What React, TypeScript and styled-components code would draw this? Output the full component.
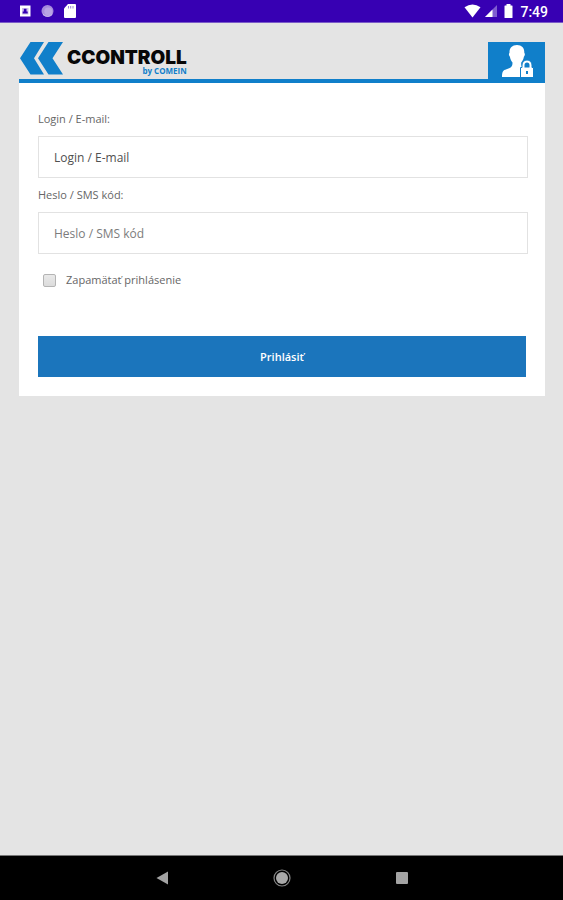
import React from 'react';
import styled, { createGlobalStyle } from 'styled-components';

const BLUE = '#1b75bc';
const LOGO_BLUE = '#107fca';

const GlobalStyle = createGlobalStyle`
  *, *::before, *::after { box-sizing: border-box; }
  body { margin: 0; background: #e4e4e4; }
`;

const Screen = styled.div`
  min-height: 100vh;
  display: flex;
  flex-direction: column;
  background: #e4e4e4;
  color: #666;
  font-family: 'Open Sans', sans-serif;
  font-size: 11px;
  line-height: 16px;
`;

const StatusBar = styled.div`
  height: 23px;
  padding: 0 15px 0 19px;
  display: flex;
  align-items: center;
  justify-content: space-between;
  background: #3700b3;
  border-bottom: 1px solid #7a5bc8;
  color: #fff;
`;

const StatusGroup = styled.div<{ $gap: number }>`
  display: flex;
  align-items: center;
  gap: ${({ $gap }) => $gap}px;
`;

const Clock = styled.time`
  margin-left: 2px;
  padding-top: 2px;
  font-family: Roboto, sans-serif;
  font-size: 14px;
  font-weight: 500;
  line-height: 16px;
`;

const Main = styled.main`
  flex: 1;
  padding: 19px 18px 19px 19px;
`;

const Header = styled.header`
  display: flex;
  align-items: flex-start;
  justify-content: space-between;
  border-bottom: 4px solid ${LOGO_BLUE};
`;

const Logo = styled.a`
  display: flex;
  gap: 3px;
  text-decoration: none;
`;

const LogoWords = styled.span`
  display: flex;
  flex-direction: column;
  align-items: flex-end;
  padding-top: 8px;
`;

const LogoName = styled.span`
  color: #080808;
  font-family: Inter, sans-serif;
  font-size: 19px;
  font-weight: 900;
  line-height: 16px;
`;

const LogoByline = styled.span`
  color: ${LOGO_BLUE};
  font-size: 8px;
  font-weight: 700;
  line-height: 10px;
`;

const AccountButton = styled.button`
  width: 57px;
  height: 37px;
  padding: 0;
  border: 0;
  display: flex;
  align-items: center;
  justify-content: center;
  background: ${LOGO_BLUE};
  cursor: pointer;
`;

const Form = styled.form`
  padding: 28px 17px 19px 19px;
  display: flex;
  flex-direction: column;
  background: #fff;
`;

const Label = styled.label`
  align-self: flex-start;
  margin-bottom: 9px;
`;

const Field = styled.input<{ $strong?: boolean }>`
  width: 100%;
  height: 42px;
  margin-bottom: 9px;
  padding: 0 15px;
  border: 1px solid #e2e2e2;
  border-radius: 0;
  background: #fff;
  color: #555;
  font: inherit;
  font-size: 12px;

  &::placeholder {
    color: ${({ $strong }) => ($strong ? '#505050' : '#7c7c7c')};
    opacity: 1;
  }
`;

const Remember = styled.label`
  align-self: flex-start;
  display: flex;
  align-items: center;
  gap: 10px;
  margin: 9px 0 48px 5px;
`;

const Checkbox = styled.input`
  appearance: none;
  width: 13px;
  height: 13px;
  margin: 0;
  border: 1px solid #b4b4b4;
  border-radius: 2px;
  background: linear-gradient(#e9e9e9, #dcdcdc);

  &:checked { background: ${BLUE}; }
`;

const Submit = styled.button`
  height: 41px;
  margin-right: 2px;
  border: 0;
  background: ${BLUE};
  color: #fff;
  font: inherit;
  font-weight: 600;
  cursor: pointer;
`;

const NavBar = styled.nav`
  height: 45px;
  border-top: 1px solid #777;
  display: flex;
  align-items: center;
  justify-content: center;
  gap: 100px;
  background: #000;
`;

const NavButton = styled.button`
  width: 20px;
  height: 20px;
  padding: 0;
  border: 0;
  display: flex;
  background: transparent;
  cursor: pointer;
`;

export default function App() {
  return (
    <>
      <GlobalStyle />
      <Screen>
        <StatusBar>
          <StatusGroup $gap={10}>
            <svg width="12" height="14" viewBox="0 0 12 14" aria-hidden="true">
              <path fill="#fff" d="M1 1.500h10.500v11H1z" />
              <path fill="#3700b3" d="M3 4h6.500v6.500H3z" opacity=".25" />
              <path fill="#3700b3" d="M4.800 4.800h2.700v2.700h1.200V9.500H3.700V7.500h1.100z" />
            </svg>
            <svg width="13" height="14" viewBox="0 0 13 14" aria-hidden="true">
              <circle cx="6.500" cy="7" r="6" fill="#a78bdd" />
              <circle cx="7.300" cy="7.600" r="4" fill="#b9a3e4" />
              <path d="M2 10a6 6 0 0 0 9.500 0" fill="none" stroke="#cfc0ee" />
            </svg>
            <svg width="12" height="14" viewBox="0 0 12 14" aria-hidden="true">
              <path fill="#fff" d="M4 0h7q1 0 1 1v12q0 1-1 1H1q-1 0-1-1V4.500z" />
              <path d="M4.500 2v2.500M6.700 2v2.500M9 2v2.500" stroke="#9b80db" />
            </svg>
          </StatusGroup>
          <StatusGroup $gap={3}>
            <svg width="17" height="14" viewBox="0 0 17 14" aria-hidden="true">
              <path fill="#fff" d="M.5 3.300Q8.500-2.500 16.500 3.300L8.500 13.500z" />
            </svg>
            <svg width="14" height="14" viewBox="0 0 14 14" aria-hidden="true">
              <path fill="#7f5dd0" d="M13 1v12H1z" />
              <path fill="#fff" d="M8.500 5.500V13H1z" />
            </svg>
            <svg width="14" height="14" viewBox="0 0 14 14" aria-hidden="true">
              <path fill="#fff" d="M5.500 0h4v1.500H11q.5 0 .5.500v11.500q0 .5-.5.500H4q-.5 0-.5-.5V2q0-.5.5-.5h1.500z" />
            </svg>
            <Clock>7:49</Clock>
          </StatusGroup>
        </StatusBar>

        <Main>
          <Header>
            <Logo href="#" aria-label="CCONTROLL by COMEIN">
              <svg width="45" height="33" viewBox="0 0 45 33" aria-hidden="true">
                <path fill={LOGO_BLUE} d="M11.500 0H25L15 16.200 25 32.500H11.500L1 16.200z" />
                <path fill={LOGO_BLUE} d="M29.500 0H44L33.500 16.200 44 32.500H29.500L19 16.200z" />
              </svg>
              <LogoWords>
                <LogoName>CCONTROLL</LogoName>
                <LogoByline>by COMEIN</LogoByline>
              </LogoWords>
            </Logo>
            <AccountButton type="button" aria-label="Account">
              <svg width="34" height="33" viewBox="0 0 34 33" aria-hidden="true">
                <path
                  fill="#fff"
                  d="M17 1c5 0 7.600 3.300 7.300 8 .9.200.8 2.500-.4 3.700-.5 3-1.700 4.700-2.700 5.800 0 3.300.6 4.100 2.800 5l6 3V33H2c0-5.500 1-6.800 4.500-7.800 4.600-1.400 6-2.300 6-6.700-1-1.100-2.100-2.800-2.600-5.800-1.200-1.200-1.300-3.500-.4-3.700C9.200 4.300 12 1 17 1z"
                />
                <path
                  fill="#fff"
                  stroke={LOGO_BLUE}
                  strokeWidth="1"
                  d="M20.500 23.500h1.500v-2.500a5 5 0 0 1 10 0v2.500h1.500v10h-13z"
                />
                <path fill={LOGO_BLUE} d="M24.500 23.500V21a2.500 2.500 0 0 1 5 0v2.500zM26 27h2v3h-2z" />
              </svg>
            </AccountButton>
          </Header>

          <Form onSubmit={(event) => event.preventDefault()}>
            <Label htmlFor="login">Login / E-mail:</Label>
            <Field id="login" type="text" placeholder="Login / E-mail" autoComplete="username" $strong />
            <Label htmlFor="password">Heslo / SMS kód:</Label>
            <Field id="password" type="password" placeholder="Heslo / SMS kód" autoComplete="current-password" />
            <Remember>
              <Checkbox type="checkbox" />
              Zapamätať prihlásenie
            </Remember>
            <Submit type="submit">Prihlásiť</Submit>
          </Form>
        </Main>

        <NavBar aria-label="System navigation">
          <NavButton type="button" aria-label="Back">
            <svg width="20" height="20" viewBox="0 0 20 20" aria-hidden="true">
              <path fill="#a3a3a3" d="M16 3.500v13L4.500 10z" />
            </svg>
          </NavButton>
          <NavButton type="button" aria-label="Home">
            <svg width="20" height="20" viewBox="0 0 20 20" aria-hidden="true">
              <circle cx="10" cy="10" r="8" fill="none" stroke="#858585" strokeWidth="1.200" />
              <circle cx="10" cy="10" r="6" fill="#a9a9a9" />
            </svg>
          </NavButton>
          <NavButton type="button" aria-label="Overview">
            <svg width="20" height="20" viewBox="0 0 20 20" aria-hidden="true">
              <rect x="4" y="4" width="12" height="12" rx="1" fill="#a3a3a3" />
            </svg>
          </NavButton>
        </NavBar>
      </Screen>
    </>
  );
}
